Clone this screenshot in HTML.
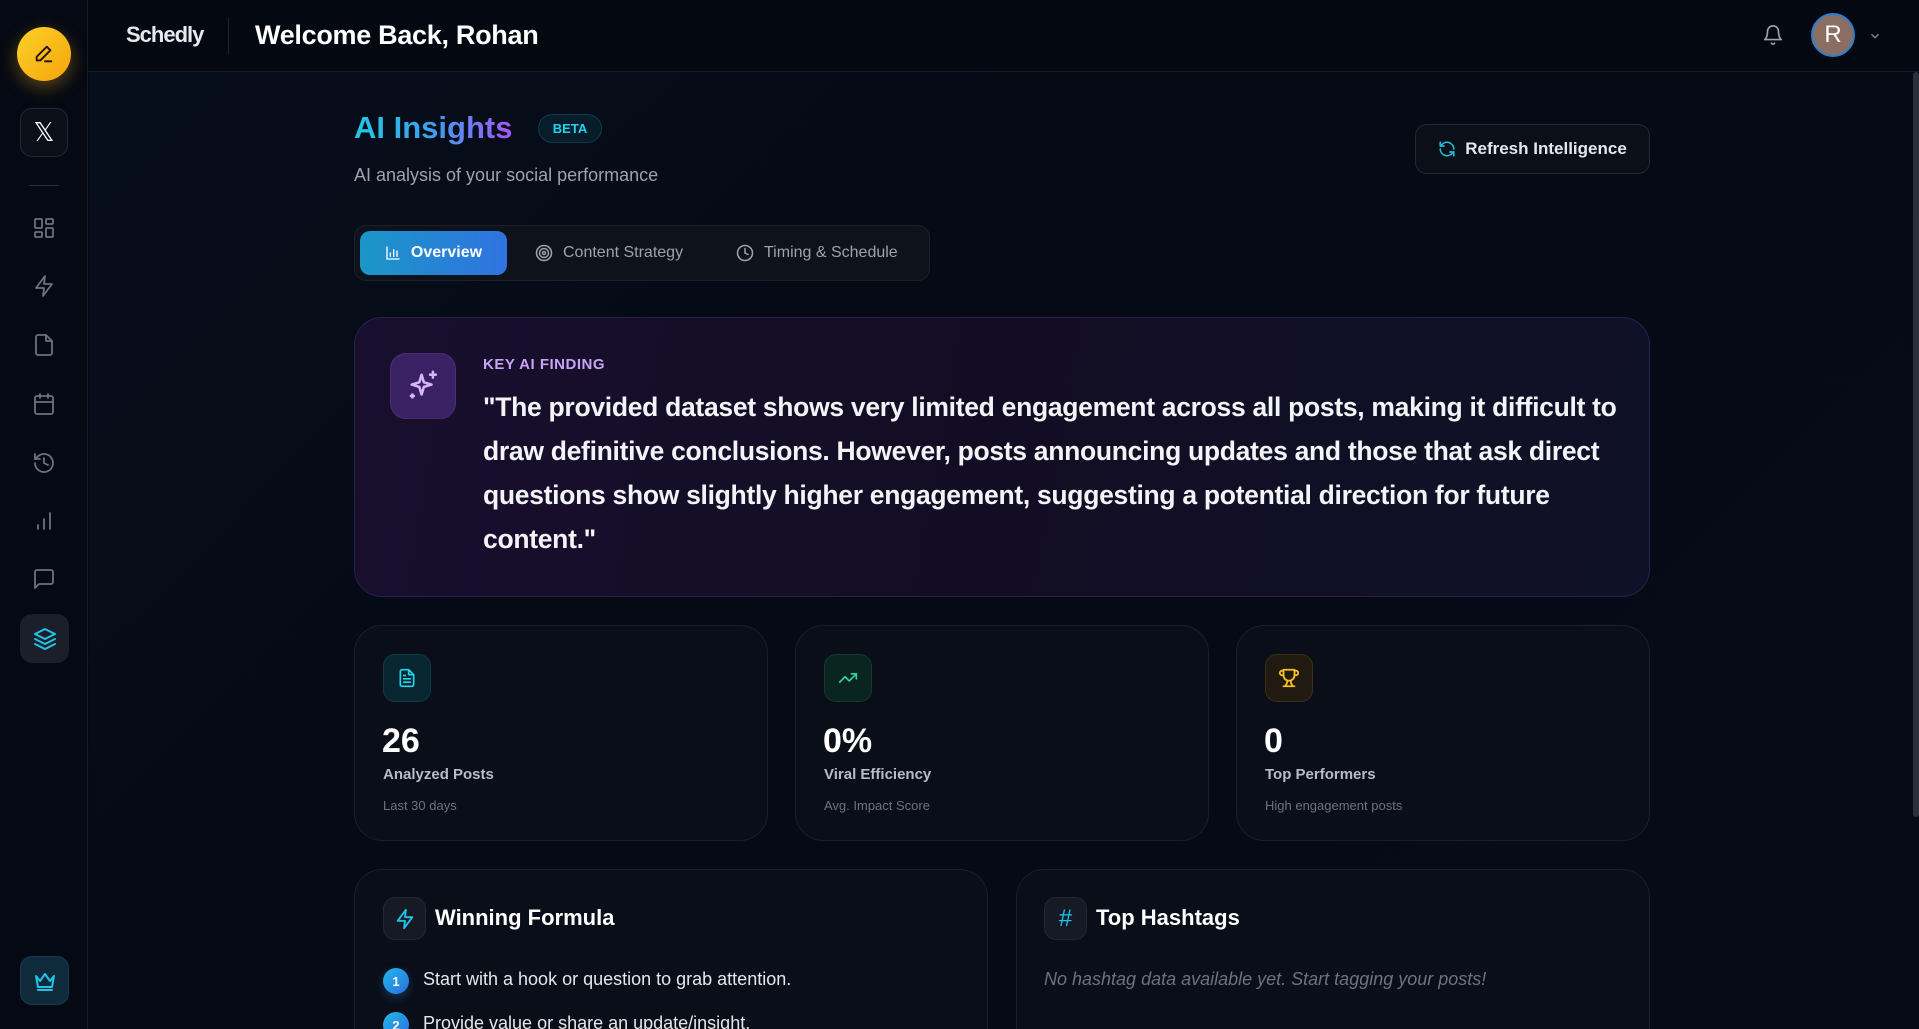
<!DOCTYPE html>
<html><head><meta charset="utf-8">
<style>
*{box-sizing:border-box;margin:0;padding:0}
html{width:1919px;height:1029px;overflow:hidden}
body{width:1919px;height:1029px;overflow:hidden;background:#050913;font-family:"Liberation Sans",sans-serif;color:#fff;position:relative}
.side{position:absolute;left:0;top:0;width:88px;height:1029px;background:#050913;border-right:1px solid #151b27}
.hdr{position:absolute;left:88px;top:0;right:0;height:72px;border-bottom:1px solid #161c28;background:#040811}
.main{position:absolute;left:89px;top:72px;right:0;height:957px;overflow:hidden;background:linear-gradient(135deg,#060d1b 0%,#050a14 40%,#060b17 100%)}
.abs{position:absolute}
.ic{position:absolute;left:32px;width:24px;height:24px}
.ic svg{width:24px;height:24px;fill:none;stroke:#6b7280;stroke-width:1.8;stroke-linecap:round;stroke-linejoin:round}
.card{position:absolute;background:#0a0e18;border:1px solid #1a1f2b;border-radius:28px}
.bcard{border-bottom:none;border-bottom-left-radius:0;border-bottom-right-radius:0}
.sic{position:absolute;left:28px;top:28px;width:48px;height:48px;border-radius:12px;display:flex;align-items:center;justify-content:center}
.num{position:absolute;left:27px;top:96px;font-size:34px;font-weight:bold}
.lbl{position:absolute;left:28px;top:140px;font-size:15px;font-weight:bold;color:#b8bcc6}
.sub{position:absolute;left:28px;top:172px;font-size:13px;color:#6b7280}
</style></head><body>
<div class="side">
  <div class="abs" style="left:17px;top:27px;width:54px;height:54px;border-radius:50%;background:linear-gradient(135deg,#fcd12a,#f5a50b);box-shadow:0 6px 18px rgba(250,180,20,.35);display:flex;align-items:center;justify-content:center">
    <svg width="22" height="22" viewBox="0 0 24 24" fill="none" stroke="#1a1205" stroke-width="2" stroke-linecap="round" stroke-linejoin="round"><path d="M15 4l4 4L8 19H4v-4z"/><path d="M13 20h7"/></svg>
  </div>
  <div class="abs" style="left:20px;top:108px;width:48px;height:49px;border-radius:12px;background:#0b0f18;border:1px solid #222836;display:flex;align-items:center;justify-content:center;font-size:26px;color:#fff">𝕏</div>
  <div class="abs" style="top:185px;width:30px;height:1px;background:#252b38;left:29px"></div>
  <div class="ic" style="top:216px"><svg viewBox="0 0 24 24"><rect x="3" y="3" width="7" height="9" rx="1"/><rect x="14" y="3" width="7" height="5" rx="1"/><rect x="14" y="12" width="7" height="9" rx="1"/><rect x="3" y="16" width="7" height="5" rx="1"/></svg></div>
  <div class="ic" style="top:274px"><svg viewBox="0 0 24 24"><path d="M13 2L4 14h8l-1 8 9-12h-8z"/></svg></div>
  <div class="ic" style="top:333px"><svg viewBox="0 0 24 24"><path d="M14 2H6a2 2 0 0 0-2 2v16a2 2 0 0 0 2 2h12a2 2 0 0 0 2-2V8z"/><path d="M14 2v6h6"/></svg></div>
  <div class="ic" style="top:392px"><svg viewBox="0 0 24 24"><rect x="3" y="4" width="18" height="18" rx="2"/><path d="M16 2v4M8 2v4M3 10h18"/></svg></div>
  <div class="ic" style="top:451px"><svg viewBox="0 0 24 24"><path d="M3 12a9 9 0 1 0 3-6.7L3 8"/><path d="M3 3v5h5"/><path d="M12 7v5l4 2"/></svg></div>
  <div class="ic" style="top:509px"><svg viewBox="0 0 24 24"><path d="M12 20V10M18 20V4M6 20v-4"/></svg></div>
  <div class="ic" style="top:567px"><svg viewBox="0 0 24 24"><path d="M21 15a2 2 0 0 1-2 2H7l-4 4V5a2 2 0 0 1 2-2h14a2 2 0 0 1 2 2z"/></svg></div>
  <div class="abs" style="left:20px;top:614px;width:49px;height:49px;border-radius:12px;background:#1a1f2a;display:flex;align-items:center;justify-content:center">
    <svg width="24" height="24" viewBox="0 0 24 24" fill="none" stroke="#22c3e6" stroke-width="2" stroke-linecap="round" stroke-linejoin="round"><path d="M12 2L2 7l10 5 10-5z"/><path d="M2 12l10 5 10-5"/><path d="M2 17l10 5 10-5"/></svg>
  </div>
  <div class="abs" style="left:20px;top:956px;width:49px;height:49px;border-radius:12px;background:#0f2a3a;border:1px solid #1a3a4e;display:flex;align-items:center;justify-content:center">
    <svg width="24" height="24" viewBox="0 0 24 24" fill="none" stroke="#22c3e6" stroke-width="2" stroke-linecap="round" stroke-linejoin="round"><path d="M3 7l4 5 5-7 5 7 4-5-2 11H5z"/><path d="M5 21h14"/></svg>
  </div>
</div>
<div class="hdr">
  <div class="abs" style="left:38px;top:22px;font-size:22px;font-weight:bold;color:#e6e8ec;letter-spacing:-1px">Schedly</div>
  <div class="abs" style="left:140px;top:18px;width:1px;height:36px;background:#1e2430"></div>
  <div class="abs" style="left:167px;top:20px;font-size:27px;font-weight:bold;color:#fff;letter-spacing:-0.3px">Welcome Back, Rohan</div>
  <svg class="abs" style="left:1674px;top:24px" width="22" height="22" viewBox="0 0 24 24" fill="none" stroke="#9ca3af" stroke-width="1.8" stroke-linecap="round" stroke-linejoin="round"><path d="M6 8a6 6 0 0 1 12 0c0 7 3 9 3 9H3s3-2 3-9"/><path d="M10.3 21a1.9 1.9 0 0 0 3.4 0"/></svg>
  <div class="abs" style="left:1723px;top:13px;width:44px;height:44px;border-radius:50%;background:#8b6e63;border:2px solid #2b7fd0;display:flex;align-items:center;justify-content:center;font-size:24px;color:#fff">R</div>
  <svg class="abs" style="left:1780px;top:29px" width="14" height="14" viewBox="0 0 24 24" fill="none" stroke="#8a909c" stroke-width="2.2"><path d="M6 9l6 6 6-6"/></svg>
</div>
<div class="main">
  <div class="abs" style="left:1824px;top:0;width:6px;height:745px;background:#2a303c;border-radius:3px"></div>
  <div class="abs" style="left:265px;top:38px;font-size:31px;font-weight:bold;background:linear-gradient(90deg,#22c7e0,#3aa0f0 50%,#a855f7);-webkit-background-clip:text;background-clip:text;color:transparent">AI Insights</div>
  <div class="abs" style="left:449px;top:42px;width:64px;height:29px;border-radius:15px;background:#071e2a;border:1px solid #0f3a48;color:#22d3ee;font-size:13px;font-weight:bold;display:flex;align-items:center;justify-content:center">BETA</div>
  <div class="abs" style="left:265px;top:93px;font-size:18px;color:#9ca3af">AI analysis of your social performance</div>
  <div class="abs" style="left:1326px;top:52px;width:235px;height:50px;border-radius:12px;background:#0b0f18;border:1px solid #232935;display:flex;align-items:center;justify-content:center;gap:9px;font-size:17px;font-weight:bold;color:#e5e7eb">
    <svg width="18" height="18" viewBox="0 0 24 24" fill="none" stroke="#22b8d6" stroke-width="2.2" stroke-linecap="round" stroke-linejoin="round"><path d="M21 12a9 9 0 0 0-15.5-6.2L3 8"/><path d="M3 3v5h5"/><path d="M3 12a9 9 0 0 0 15.5 6.2L21 16"/><path d="M21 21v-5h-5"/></svg>Refresh Intelligence</div>
  <div class="abs" style="left:265px;top:153px;width:576px;height:56px;border-radius:12px;background:#0e121b;border:1px solid #1b202b"></div>
  <div class="abs" style="left:271px;top:159px;width:147px;height:44px;border-radius:10px;background:linear-gradient(90deg,#1b96c8,#2f73e0);display:flex;align-items:center;justify-content:center;gap:10px;font-size:16px;font-weight:bold">
    <svg width="16" height="16" viewBox="0 0 24 24" fill="none" stroke="#fff" stroke-width="2" stroke-linecap="round"><path d="M3 3v18h18M8 17v-5M13 17V7M18 17v-8"/></svg>Overview</div>
  <div class="abs" style="left:446px;top:172px;display:flex;align-items:center;gap:10px;font-size:16px;color:#9ca3af">
    <svg width="18" height="18" viewBox="0 0 24 24" fill="none" stroke="#9ca3af" stroke-width="2"><circle cx="12" cy="12" r="10"/><circle cx="12" cy="12" r="6"/><circle cx="12" cy="12" r="2"/></svg>Content Strategy</div>
  <div class="abs" style="left:647px;top:172px;display:flex;align-items:center;gap:10px;font-size:16px;color:#9ca3af">
    <svg width="18" height="18" viewBox="0 0 24 24" fill="none" stroke="#9ca3af" stroke-width="2" stroke-linecap="round"><circle cx="12" cy="12" r="10"/><path d="M12 6v6l4 2"/></svg>Timing &amp; Schedule</div>

  <div class="abs" style="left:265px;top:245px;width:1296px;height:280px;border-radius:28px;background:linear-gradient(100deg,#180f2e 0%,#120d24 50%,#0f1128 100%);border:1px solid #2c1f4c">
    <div class="abs" style="left:35px;top:35px;width:66px;height:66px;border-radius:16px;background:#3a2163;border:1px solid #4a2d7a;display:flex;align-items:center;justify-content:center">
      <svg width="34" height="34" viewBox="0 0 24 24" fill="none" stroke="#d8b4fe" stroke-width="1.8" stroke-linecap="round" stroke-linejoin="round"><path d="M11 4l1.6 5.4L18 11l-5.4 1.6L11 18l-1.6-5.4L4 11l5.4-1.6z"/><path d="M19 2v4M17 4h4M4.5 18v2M3.5 19h2"/></svg>
    </div>
    <div class="abs" style="left:128px;top:38px;font-size:15px;font-weight:bold;color:#c9a4f5;letter-spacing:.5px">KEY AI FINDING</div>
    <div class="abs" style="left:128px;top:67px;white-space:nowrap;font-size:26.5px;line-height:44px;font-weight:bold;color:#f3f4f6;letter-spacing:-0.3px">"The provided dataset shows very limited engagement across all posts, making it difficult to<br>draw definitive conclusions. However, posts announcing updates and those that ask direct<br>questions show slightly higher engagement, suggesting a potential direction for future<br>content."</div>
  </div>

  <div class="card" style="left:265px;top:553px;width:414px;height:216px">
    <div class="sic" style="background:#082630;border:1px solid #0e3a44"><svg width="20" height="20" viewBox="0 0 24 24" fill="none" stroke="#22d3ee" stroke-width="2" stroke-linecap="round" stroke-linejoin="round"><path d="M14 2H6a2 2 0 0 0-2 2v16a2 2 0 0 0 2 2h12a2 2 0 0 0 2-2V8z"/><path d="M14 2v6h6M16 13H8M16 17H8M10 9H8"/></svg></div>
    <div class="num">26</div><div class="lbl">Analyzed Posts</div><div class="sub">Last 30 days</div>
  </div>
  <div class="card" style="left:706px;top:553px;width:414px;height:216px">
    <div class="sic" style="background:#0a2420;border:1px solid #0f3a30"><svg width="20" height="20" viewBox="0 0 24 24" fill="none" stroke="#34d399" stroke-width="2" stroke-linecap="round" stroke-linejoin="round"><path d="M22 7l-8.5 8.5-5-5L2 17"/><path d="M16 7h6v6"/></svg></div>
    <div class="num">0%</div><div class="lbl">Viral Efficiency</div><div class="sub">Avg. Impact Score</div>
  </div>
  <div class="card" style="left:1147px;top:553px;width:414px;height:216px">
    <div class="sic" style="background:#211a10;border:1px solid #3d2e12"><svg width="22" height="22" viewBox="0 0 24 24" fill="none" stroke="#fbbf24" stroke-width="2" stroke-linecap="round" stroke-linejoin="round"><path d="M6 9H4.5a2.5 2.5 0 0 1 0-5H6M18 9h1.5a2.5 2.5 0 0 0 0-5H18"/><path d="M6 3h12v6a6 6 0 0 1-12 0z"/><path d="M10 14.7V17l-2 4h8l-2-4v-2.3M6 21h12"/></svg></div>
    <div class="num">0</div><div class="lbl">Top Performers</div><div class="sub">High engagement posts</div>
  </div>

  <div class="card bcard" style="left:265px;top:797px;width:634px;height:160px;overflow:hidden">
    <div class="abs" style="left:28px;top:27px;width:43px;height:43px;border-radius:12px;background:#151a24;border:1px solid #222836;display:flex;align-items:center;justify-content:center"><svg width="22" height="22" viewBox="0 0 24 24" fill="none" stroke="#22c3e6" stroke-width="2" stroke-linecap="round" stroke-linejoin="round"><path d="M13 2L4 14h8l-1 8 9-12h-8z"/></svg></div>
    <div class="abs" style="left:80px;top:35px;font-size:22px;font-weight:bold">Winning Formula</div>
    <div class="abs" style="left:28px;top:98px;width:26px;height:26px;border-radius:50%;background:linear-gradient(135deg,#22b8e6,#2a6ee0);font-size:13px;font-weight:bold;display:flex;align-items:center;justify-content:center;box-shadow:0 4px 10px rgba(40,140,230,.3)">1</div>
    <div class="abs" style="left:68px;top:99px;font-size:18px;color:#e5e7eb">Start with a hook or question to grab attention.</div>
    <div class="abs" style="left:28px;top:142px;width:26px;height:26px;border-radius:50%;background:linear-gradient(135deg,#22b8e6,#2a6ee0);font-size:13px;font-weight:bold;display:flex;align-items:center;justify-content:center">2</div>
    <div class="abs" style="left:68px;top:143px;font-size:18px;color:#e5e7eb">Provide value or share an update/insight.</div>
  </div>
  <div class="card bcard" style="left:927px;top:797px;width:634px;height:160px;overflow:hidden">
    <div class="abs" style="left:27px;top:27px;width:43px;height:43px;border-radius:12px;background:#151a24;border:1px solid #222836;display:flex;align-items:center;justify-content:center;color:#22c3e6;font-size:24px">#</div>
    <div class="abs" style="left:79px;top:35px;font-size:22px;font-weight:bold">Top Hashtags</div>
    <div class="abs" style="left:27px;top:99px;font-size:18px;font-style:italic;color:#6b7280">No hashtag data available yet. Start tagging your posts!</div>
  </div>
</div>
</body></html>
